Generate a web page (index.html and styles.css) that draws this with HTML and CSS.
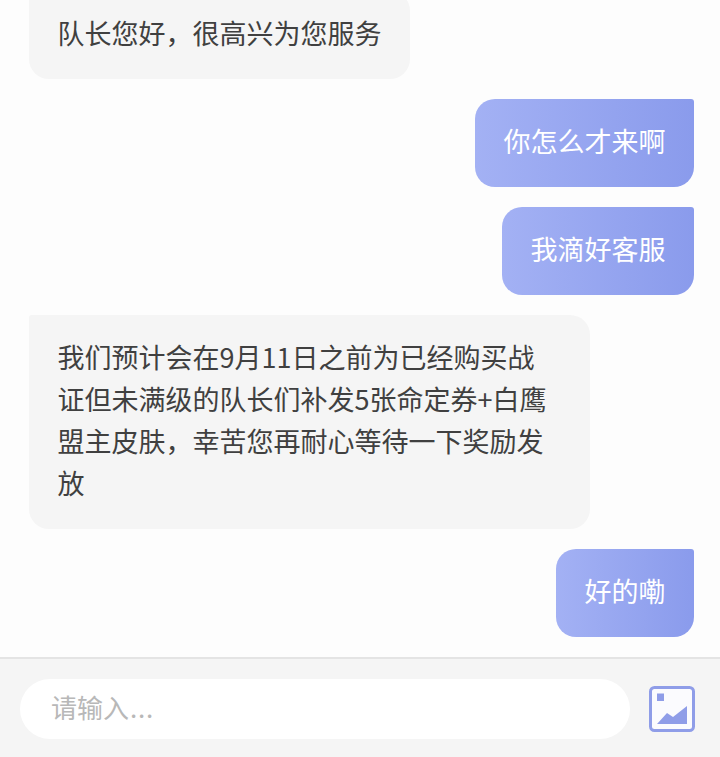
FILE: index.html
```html
<!DOCTYPE html>
<html lang="zh-CN">
<head>
    <meta charset="UTF-8">
    <meta name="viewport" content="width=device-width, initial-scale=1.0">
    <title>客服</title>
    <link rel="stylesheet" href="styles.css">
</head>
<body>

<div class="chat">
    <div class="msg msg-in">队长您好，很高兴为您服务</div>
    <div class="msg msg-out">你怎么才来啊</div>
    <div class="msg msg-out">我滴好客服</div>
    <div class="msg msg-in msg-long">我们预计会在9月11日之前为已经购买战证但未满级的队长们补发5张命定券+白鹰盟主皮肤，幸苦您再耐心等待一下奖励发放</div>
    <div class="msg msg-out">好的嘞</div>
</div>

<footer class="input-bar">
    <div class="input-box">请输入<span class="dots">...</span></div>
    <svg class="pic-icon" width="46" height="46" viewBox="0 0 46 46">
        <rect x="1.5" y="1.5" width="43" height="43" rx="4" fill="#fbfbfe" stroke="#8f9de8" stroke-width="3"/>
        <rect x="8" y="7.5" width="7" height="7.5" fill="#8f9de8"/>
        <path d="M8 38 L18 27 L24 31 L38 20 L38 38 Z" fill="#8f9de8"/>
    </svg>
</footer>

</body>
</html>
```

FILE: styles.css
```css
* {
    box-sizing: border-box;
}
html, body {
    height: 100%;
}
body {
    margin: 0;
    display: flex;
    flex-direction: column;
    height: 757px;
    overflow: hidden;
    background-color: #fdfdfd;
    font-family: "Noto Sans CJK SC", "Noto Sans", sans-serif;
}
.chat {
    flex: 1;
    min-height: 0;
    display: flex;
    flex-direction: column;
    justify-content: flex-end;
    gap: 20px;
    padding: 0 26px 20px 29px;
    overflow: hidden;
}
.msg {
    flex: none;
    max-width: 561px;
    padding: 21px 28.5px 25px;
    font-size: 27px;
    line-height: 42px;
}
.msg-in {
    align-self: flex-start;
    background-color: #f5f5f5;
    color: #404040;
    border-radius: 3px 20px 20px 20px;
}
.msg-long {
    padding-right: 34px;
}
.msg-out {
    align-self: flex-end;
    background: linear-gradient(to right, #a3b1f4, #8a9bec);
    color: #fff;
    border-radius: 20px 3px 20px 20px;
}
.input-bar {
    flex: none;
    height: 100px;
    display: flex;
    align-items: center;
    gap: 19px;
    padding: 2px 25px 0 20px;
    background-color: #f5f5f5;
    border-top: 2px solid #e4e4e4;
}
.input-box {
    flex: 1;
    height: 60px;
    padding-left: 31px;
    border-radius: 30px;
    background-color: #fff;
    color: #b8b8b8;
    font-size: 26px;
    line-height: 56px;
}
.dots {
    letter-spacing: 0.8px;
    margin-left: 1px;
}
.pic-icon {
    flex: none;
}
```
